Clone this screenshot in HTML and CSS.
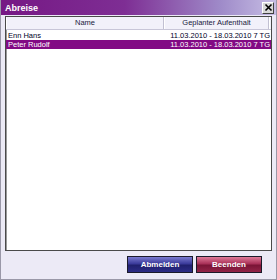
FILE: index.html
```html
<!DOCTYPE html>
<html>
<head>
    <link rel="stylesheet" href="styles.css">
</head>
<body>
    <div class="window">
        <div class="titlebar">
            <span class="title">Abreise</span>
            <span class="close-btn">
                <svg width="9" height="9" viewBox="0 0 9 9">
                    <path d="M1.5 1.5 L7.5 7.5 M7.5 1.5 L1.5 7.5" stroke="#000" stroke-width="1.6"/>
                </svg>
            </span>
        </div>
        <div class="content">
            <div class="listview">
                <div class="list-header">
                    <div class="col col-name">Name</div>
                    <div class="col col-stay">Geplanter Aufenthalt</div>
                    <div class="col col-rest"></div>
                </div>
                <div class="row">
                    <div class="cell cell-name">Enn Hans</div>
                    <div class="cell cell-stay">11.03.2010 - 18.03.2010 7 TG</div>
                </div>
                <div class="row selected">
                    <div class="cell cell-name">Peter Rudolf</div>
                    <div class="cell cell-stay">11.03.2010 - 18.03.2010 7 TG</div>
                </div>
            </div>
            <div class="buttons">
                <button class="btn btn-blue">Abmelden</button>
                <button class="btn btn-red">Beenden</button>
            </div>
        </div>
    </div>
</body>
</html>
```

FILE: styles.css
```css
body {
    margin: 0;
    font-family: "Liberation Sans", Arial, sans-serif;
    background: #fff;
}
.window {
    width: 277px;
    height: 280px;
    box-sizing: border-box;
    border: 1px solid #9a98a8;
    border-top: none;
    background: #eceaf6;
    display: flex;
    flex-direction: column;
}
.titlebar {
    height: 18px;
    display: flex;
    align-items: center;
    justify-content: space-between;
    padding: 0 2px 0 4px;
    background: linear-gradient(to right, #761884 0%, #7e2e94 45%, #9f8bc9 80%, #c6bde4 100%);
}
.title {
    color: #fff;
    font-weight: bold;
    font-size: 9px;
}
.close-btn {
    width: 12px;
    height: 12px;
    box-sizing: border-box;
    background: #d8d8d8;
    border: 1px solid;
    border-color: #fff #404040 #404040 #fff;
    display: flex;
    align-items: center;
    justify-content: center;
}
.content {
    flex: 1;
    display: flex;
    flex-direction: column;
    padding: 1px 4px 6px 4px;
}
.listview {
    height: 233px;
    background: #fff;
    border: 1px solid #4a4a4a;
    box-shadow: inset 1px 1px 0 #9a9a9a;
    font-size: 7.5px;
}
.list-header {
    display: flex;
    height: 12px;
    border-bottom: 1px solid #c8c6d8;
}
.col {
    box-sizing: border-box;
    background: #f2f1fa;
    border-right: 1px solid #c2c0d2;
    border-left: 1px solid #fff;
    text-align: center;
    line-height: 12px;
    color: #202040;
}
.col-name { width: 158px; }
.col-stay { width: 105px; }
.col-rest { flex: 1; border-right: none; }
.row {
    display: flex;
    height: 9px;
    line-height: 9px;
    color: #000028;
}
.list-header + .row { margin-top: 1px; }
.cell-name {
    width: 158px;
    padding-left: 2px;
}
.cell-stay {
    width: 104px;
    text-align: right;
}
.row.selected {
    background: #820a84;
    color: #fff;
}
.buttons {
    display: flex;
    justify-content: flex-end;
    gap: 3px;
    margin-top: 5px;
    padding-right: 10px;
}
.btn {
    width: 66px;
    height: 17px;
    font-family: "Liberation Sans", Arial, sans-serif;
    font-size: 8px;
    font-weight: bold;
    color: #fff;
    padding: 0;
    border: 1px solid #1a1a2a;
    cursor: pointer;
}
.btn-blue {
    background: linear-gradient(to bottom, #7a7ad0 0%, #3a3a9a 45%, #20206e 55%, #2c2c86 100%);
}
.btn-red {
    background: linear-gradient(to bottom, #e07a98 0%, #a83058 45%, #7a1436 55%, #922448 100%);
}
```
